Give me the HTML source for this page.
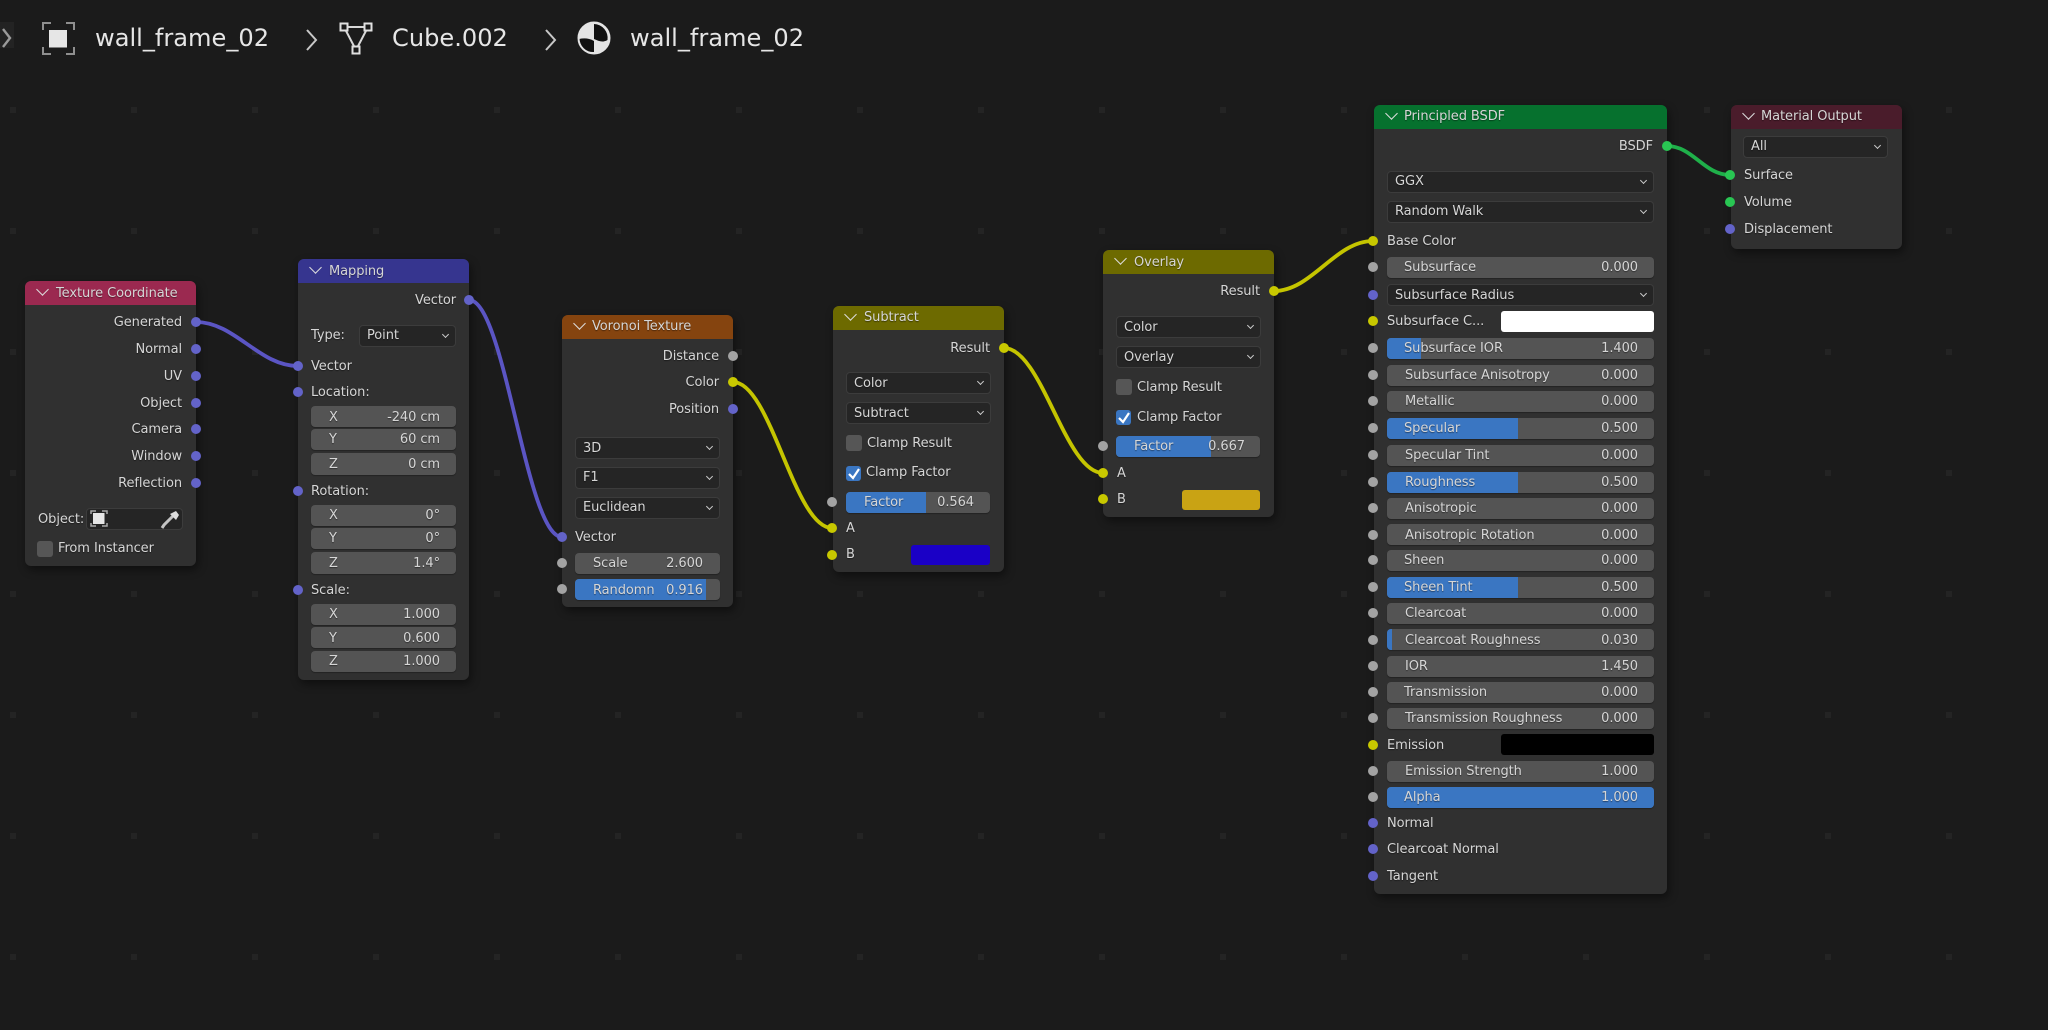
<!DOCTYPE html>
<html lang="en"><head><meta charset="utf-8"><title>Blender Shader Nodes</title>
<style>
html,body{margin:0;padding:0;background:#1b1b1b}
body{position:relative;width:2048px;height:1030px;overflow:hidden;font:13px/20px "DejaVu Sans","Liberation Sans",sans-serif;color:#d6d6d6;filter:blur(.35px)}
svg{position:absolute;left:0;top:0}
.n{position:absolute;background:#303030;border-radius:6px;box-shadow:2px 4px 9px rgba(0,0,0,.45)}
.h{position:absolute;left:0;right:0;top:0;height:24px;border-radius:6px 6px 0 0}
.t{position:absolute;white-space:nowrap;text-shadow:0 1px 1px rgba(0,0,0,.45);margin-top:1px;letter-spacing:-.08px}
.r{text-align:right}
.f{position:absolute;background:#545454;border-radius:4px;box-shadow:0 1px 1px rgba(0,0,0,.3);height:21px;overflow:hidden}
.b{position:absolute;left:0;top:0;bottom:0;background:#3a76c2}
.d{position:absolute;background:#252525;border:1px solid #3c3c3c;border-radius:4px;height:20px;box-sizing:content-box}
.d:after{content:"";position:absolute;right:7px;top:6px;width:4px;height:4px;border-right:1.5px solid #ccc;border-bottom:1.5px solid #ccc;transform:rotate(45deg)}
.d.x:after{display:none}
.c{position:absolute;width:8px;height:8px;border-right:1.5px solid #ddd;border-bottom:1.5px solid #ddd;transform:rotate(45deg);margin-top:-2px}
.s{position:absolute;width:10px;height:10px;border-radius:50%;margin:-5px 0 0 -5px}
.p{background:#6363c9}.y{background:#c8c800}.g{background:#a3a3a3}.e{background:#29c653}
.k{position:absolute;width:16px;height:16px;border-radius:3px;background:#565656}
.w{position:absolute;border-radius:3px}
.top{position:absolute;font-size:24.1px;line-height:30px;color:#e6e6e6;white-space:nowrap;margin-top:1px}
</style></head><body>
<svg width="2048" height="1030"><defs><pattern id="dots" x="10" y="107" width="121" height="121" patternUnits="userSpaceOnUse"><rect width="6" height="6" fill="#242424"/></pattern></defs>
<rect x="0" y="100" width="1965" height="870" fill="url(#dots)"/></svg>

<svg width="2048" height="70" viewBox="0 0 2048 70" fill="none">
<rect x="0" y="22" width="14" height="26" fill="#232323"/>
<path d="M3 29l7 9-7 9" stroke="#9a9a9a" stroke-width="2.4"/>
<path d="M307 30l9 10-9 10M546 30l9 10-9 10" stroke="#c8c8c8" stroke-width="2"/>
<path d="M43 30v-7h8M66 23h8v7M43 47v7h8M66 54h8v-7" stroke="#8f8f8f" stroke-width="2"/>
<rect x="49" y="30" width="18" height="17.500" fill="#e6e6e6"/>
<path d="M344 27h24M344 27l12 23M368 27l-12 23" stroke="#d8d8d8" stroke-width="2"/>
<rect x="340.500" y="23.500" width="7" height="7" fill="#1b1b1b" stroke="#e0e0e0" stroke-width="2"/>
<rect x="364.500" y="23.500" width="7" height="7" fill="#1b1b1b" stroke="#e0e0e0" stroke-width="2"/>
<rect x="352.500" y="46.500" width="7" height="7" fill="#1b1b1b" stroke="#e0e0e0" stroke-width="2"/>
<circle cx="594" cy="38" r="15.500" fill="#e4e4e4"/>
<path d="M594 24a14 14 0 0 1 13.500 16c-5 3-9 1-13.500-1z" fill="#111"/>
<path d="M579 39c5-1 10-1 15 2v11a14 14 0 0 1-15-13z" fill="#111"/>
<circle cx="594" cy="38" r="15.500" stroke="#e4e4e4" stroke-width="2"/>
</svg>
<div class="top" style="left:95px;top:22px">wall_frame_02</div>
<div class="top" style="left:392px;top:22px">Cube.002</div>
<div class="top" style="left:630px;top:22px">wall_frame_02</div>

<!-- Texture Coordinate -->
<div class="n" style="left:25px;top:281px;width:171px;height:285px"><div class="h" style="background:#9b2950"></div></div>
<div class="c" style="left:38px;top:287px"></div><div class="t" style="left:56px;top:283px">Texture Coordinate</div>
<div class="t r" style="right:1866px;top:312px">Generated</div>
<div class="t r" style="right:1866px;top:339px">Normal</div>
<div class="t r" style="right:1866px;top:366px">UV</div>
<div class="t r" style="right:1866px;top:393px">Object</div>
<div class="t r" style="right:1866px;top:419px">Camera</div>
<div class="t r" style="right:1866px;top:446px">Window</div>
<div class="t r" style="right:1866px;top:473px">Reflection</div>
<div class="t" style="left:38px;top:509px">Object:</div>
<div class="d x" style="left:86px;top:508px;width:95px"></div>
<svg width="2048" height="1030" fill="none" style="z-index:2">
<path d="M91 514v-3h5M102 511h5v3M91 523v3h5M102 526h5v-3" stroke="#aaa" stroke-width="1.500"/>
<rect x="93" y="513" width="11.500" height="11" fill="#e6e6e6"/>
<path d="M162 528l2-3 9-9" stroke="#c4c4c4" stroke-width="3"/>
<path d="M170 514l6 6 3-5-3-4z" fill="#ddd"/>
</svg>
<div class="k" style="left:37px;top:541px"></div><div class="t" style="left:58px;top:538px">From Instancer</div>

<!-- Mapping -->
<div class="n" style="left:298px;top:259px;width:171px;height:421px"><div class="h" style="background:#36358f"></div></div>
<div class="c" style="left:311px;top:265px"></div><div class="t" style="left:329px;top:261px">Mapping</div>
<div class="t r" style="right:1592px;top:290px">Vector</div>
<div class="t" style="left:311px;top:325px">Type:</div>
<div class="d" style="left:359px;top:325px;width:95px"></div><div class="t" style="left:367px;top:325px">Point</div>
<div class="t" style="left:311px;top:356px">Vector</div>
<div class="t" style="left:311px;top:382px">Location:</div>
<div class="f" style="left:311px;top:406px;width:145px"></div><div class="f" style="left:311px;top:429px;width:145px"></div><div class="f" style="left:311px;top:453px;width:145px;height:22px"></div>
<div class="t" style="left:329px;top:407px">X</div><div class="t r" style="right:1608px;top:407px">-240 cm</div>
<div class="t" style="left:329px;top:429px">Y</div><div class="t r" style="right:1608px;top:429px">60 cm</div>
<div class="t" style="left:329px;top:454px">Z</div><div class="t r" style="right:1608px;top:454px">0 cm</div>
<div class="t" style="left:311px;top:481px">Rotation:</div>
<div class="f" style="left:311px;top:505px;width:145px"></div><div class="f" style="left:311px;top:528px;width:145px"></div><div class="f" style="left:311px;top:552px;width:145px;height:22px"></div>
<div class="t" style="left:329px;top:505px">X</div><div class="t r" style="right:1608px;top:505px">0°</div>
<div class="t" style="left:329px;top:528px">Y</div><div class="t r" style="right:1608px;top:528px">0°</div>
<div class="t" style="left:329px;top:553px">Z</div><div class="t r" style="right:1608px;top:553px">1.4°</div>
<div class="t" style="left:311px;top:580px">Scale:</div>
<div class="f" style="left:311px;top:604px;width:145px"></div><div class="f" style="left:311px;top:627px;width:145px"></div><div class="f" style="left:311px;top:651px;width:145px"></div>
<div class="t" style="left:329px;top:604px">X</div><div class="t r" style="right:1608px;top:604px">1.000</div>
<div class="t" style="left:329px;top:628px">Y</div><div class="t r" style="right:1608px;top:628px">0.600</div>
<div class="t" style="left:329px;top:651px">Z</div><div class="t r" style="right:1608px;top:651px">1.000</div>

<!-- Voronoi -->
<div class="n" style="left:562px;top:315px;width:171px;height:292px"><div class="h" style="background:#85440f"></div></div>
<div class="c" style="left:575px;top:321px"></div><div class="t" style="left:592px;top:316px">Voronoi Texture</div>
<div class="t r" style="right:1329px;top:346px">Distance</div>
<div class="t r" style="right:1329px;top:372px">Color</div>
<div class="t r" style="right:1329px;top:399px">Position</div>
<div class="d" style="left:575px;top:437px;width:143px"></div><div class="t" style="left:583px;top:438px">3D</div>
<div class="d" style="left:575px;top:467px;width:143px"></div><div class="t" style="left:583px;top:467px">F1</div>
<div class="d" style="left:575px;top:497px;width:143px"></div><div class="t" style="left:583px;top:497px">Euclidean</div>
<div class="t" style="left:575px;top:527px">Vector</div>
<div class="f" style="left:575px;top:553px;width:145px"></div><div class="t" style="left:593px;top:553px">Scale</div><div class="t r" style="right:1345px;top:553px">2.600</div>
<div class="f" style="left:575px;top:579px;width:145px"><div class="b" style="width:131px"></div></div><div class="t" style="left:593px;top:580px">Randomn</div><div class="t r" style="right:1345px;top:580px">0.916</div>

<!-- Subtract -->
<div class="n" style="left:833px;top:306px;width:171px;height:266px"><div class="h" style="background:#6d6a00"></div></div>
<div class="c" style="left:846px;top:312px"></div><div class="t" style="left:864px;top:307px">Subtract</div>
<div class="t r" style="right:1058px;top:338px">Result</div>
<div class="d" style="left:846px;top:372px;width:143px"></div><div class="t" style="left:854px;top:373px">Color</div>
<div class="d" style="left:846px;top:402px;width:143px"></div><div class="t" style="left:854px;top:403px">Subtract</div>
<div class="k" style="left:846px;top:435px"></div><div class="t" style="left:867px;top:433px">Clamp Result</div>
<div class="k" style="left:846px;top:466px;width:15px;height:15px;background:#3a76c2"></div><div class="t" style="left:866px;top:462px">Clamp Factor</div>
<div class="f" style="left:846px;top:492px;width:144px"><div class="b" style="width:80px"></div></div><div class="t" style="left:864px;top:492px">Factor</div><div class="t r" style="right:1074px;top:492px">0.564</div>
<div class="t" style="left:846px;top:518px">A</div>
<div class="t" style="left:846px;top:544px">B</div>
<div class="w" style="left:911px;top:545px;width:79px;height:20px;background:#1a00c6"></div>

<!-- Overlay -->
<div class="n" style="left:1103px;top:250px;width:171px;height:267px"><div class="h" style="background:#6d6a00"></div></div>
<div class="c" style="left:1116px;top:256px"></div><div class="t" style="left:1134px;top:252px">Overlay</div>
<div class="t r" style="right:788px;top:281px">Result</div>
<div class="d" style="left:1116px;top:316px;width:143px"></div><div class="t" style="left:1124px;top:317px">Color</div>
<div class="d" style="left:1116px;top:346px;width:143px"></div><div class="t" style="left:1124px;top:347px">Overlay</div>
<div class="k" style="left:1116px;top:379px"></div><div class="t" style="left:1137px;top:377px">Clamp Result</div>
<div class="k" style="left:1116px;top:410px;width:15px;height:15px;background:#3a76c2"></div><div class="t" style="left:1137px;top:407px">Clamp Factor</div>
<div class="f" style="left:1116px;top:436px;width:144px"><div class="b" style="width:95px"></div></div><div class="t" style="left:1134px;top:436px">Factor</div><div class="t r" style="right:803px;top:436px">0.667</div>
<div class="t" style="left:1117px;top:463px">A</div>
<div class="t" style="left:1117px;top:489px">B</div>
<div class="w" style="left:1182px;top:490px;width:78px;height:20px;background:#c9a314"></div>

<!-- check marks -->
<svg width="2048" height="1030" fill="none" style="z-index:2">
<path d="M849 474l4 4 6-9M1119 418l4 4 6-9" stroke="#fff" stroke-width="2.200"/>
</svg>

<!-- Principled BSDF -->
<div class="n" style="left:1374px;top:105px;width:293px;height:789px"><div class="h" style="background:#06712e"></div></div>
<div class="c" style="left:1387px;top:111px"></div><div class="t" style="left:1404px;top:106px">Principled BSDF</div>
<div class="t r" style="right:395px;top:136px">BSDF</div>
<div class="d" style="left:1387px;top:171px;width:265px"></div><div class="t" style="left:1395px;top:171px">GGX</div>
<div class="d" style="left:1387px;top:201px;width:265px"></div><div class="t" style="left:1395px;top:201px">Random Walk</div>
<div class="t" style="left:1387px;top:231px">Base Color</div>
<div class="f" style="left:1387px;top:257px;width:267px"></div><div class="t" style="left:1404px;top:257px">Subsurface</div><div class="t r" style="right:410px;top:257px">0.000</div>
<div class="d" style="left:1387px;top:284px;width:265px"></div><div class="t" style="left:1395px;top:285px">Subsurface Radius</div>
<div class="t" style="left:1387px;top:311px">Subsurface C...</div>
<div class="w" style="left:1501px;top:311px;width:153px;height:21px;background:#fff"></div>
<div class="f" style="left:1387px;top:338px;width:267px"><div class="b" style="width:34px"></div></div><div class="t" style="left:1404px;top:338px">Subsurface IOR</div><div class="t r" style="right:410px;top:338px">1.400</div>
<div class="f" style="left:1387px;top:365px;width:267px"></div><div class="t" style="left:1405px;top:365px">Subsurface Anisotropy</div><div class="t r" style="right:410px;top:365px">0.000</div>
<div class="f" style="left:1387px;top:391px;width:267px"></div><div class="t" style="left:1405px;top:391px">Metallic</div><div class="t r" style="right:410px;top:391px">0.000</div>
<div class="f" style="left:1387px;top:418px;width:267px"><div class="b" style="width:131px"></div></div><div class="t" style="left:1404px;top:418px">Specular</div><div class="t r" style="right:410px;top:418px">0.500</div>
<div class="f" style="left:1387px;top:445px;width:267px"></div><div class="t" style="left:1405px;top:445px">Specular Tint</div><div class="t r" style="right:410px;top:445px">0.000</div>
<div class="f" style="left:1387px;top:472px;width:267px"><div class="b" style="width:131px"></div></div><div class="t" style="left:1405px;top:472px">Roughness</div><div class="t r" style="right:410px;top:472px">0.500</div>
<div class="f" style="left:1387px;top:498px;width:267px"></div><div class="t" style="left:1405px;top:498px">Anisotropic</div><div class="t r" style="right:410px;top:498px">0.000</div>
<div class="f" style="left:1387px;top:524px;width:267px"></div><div class="t" style="left:1405px;top:525px">Anisotropic Rotation</div><div class="t r" style="right:410px;top:525px">0.000</div>
<div class="f" style="left:1387px;top:550px;width:267px"></div><div class="t" style="left:1404px;top:550px">Sheen</div><div class="t r" style="right:410px;top:550px">0.000</div>
<div class="f" style="left:1387px;top:577px;width:267px"><div class="b" style="width:131px"></div></div><div class="t" style="left:1404px;top:577px">Sheen Tint</div><div class="t r" style="right:410px;top:577px">0.500</div>
<div class="f" style="left:1387px;top:603px;width:267px"></div><div class="t" style="left:1405px;top:603px">Clearcoat</div><div class="t r" style="right:410px;top:603px">0.000</div>
<div class="f" style="left:1387px;top:629px;width:267px"><div class="b" style="width:5px"></div></div><div class="t" style="left:1405px;top:630px">Clearcoat Roughness</div><div class="t r" style="right:410px;top:630px">0.030</div>
<div class="f" style="left:1387px;top:656px;width:267px"></div><div class="t" style="left:1405px;top:656px">IOR</div><div class="t r" style="right:410px;top:656px">1.450</div>
<div class="f" style="left:1387px;top:682px;width:267px"></div><div class="t" style="left:1404px;top:682px">Transmission</div><div class="t r" style="right:410px;top:682px">0.000</div>
<div class="f" style="left:1387px;top:708px;width:267px"></div><div class="t" style="left:1405px;top:708px">Transmission Roughness</div><div class="t r" style="right:410px;top:708px">0.000</div>
<div class="t" style="left:1387px;top:735px">Emission</div>
<div class="w" style="left:1501px;top:734px;width:153px;height:21px;background:#000"></div>
<div class="f" style="left:1387px;top:761px;width:267px"></div><div class="t" style="left:1405px;top:761px">Emission Strength</div><div class="t r" style="right:410px;top:761px">1.000</div>
<div class="f" style="left:1387px;top:787px;width:267px"><div class="b" style="width:267px"></div></div><div class="t" style="left:1404px;top:787px">Alpha</div><div class="t r" style="right:410px;top:787px">1.000</div>
<div class="t" style="left:1387px;top:813px">Normal</div>
<div class="t" style="left:1387px;top:839px">Clearcoat Normal</div>
<div class="t" style="left:1387px;top:866px">Tangent</div>

<!-- Material Output -->
<div class="n" style="left:1731px;top:105px;width:171px;height:144px"><div class="h" style="background:#4a1c2b"></div></div>
<div class="c" style="left:1744px;top:111px"></div><div class="t" style="left:1761px;top:106px">Material Output</div>
<div class="d" style="left:1743px;top:136px;width:143px"></div><div class="t" style="left:1751px;top:136px">All</div>
<div class="t" style="left:1744px;top:165px">Surface</div>
<div class="t" style="left:1744px;top:192px">Volume</div>
<div class="t" style="left:1744px;top:219px">Displacement</div>

<!-- wires -->
<svg width="2048" height="1030" fill="none" style="z-index:3">
<g stroke-width="3.800" stroke-linecap="round">
<path d="M196 322C235 322 259 366 298 366" stroke="#5b55c4"/>
<path d="M469 300C505 300 526 537 562 537" stroke="#5b55c4"/>
<path d="M733 382C771 382 794 528 832 528" stroke="#c4c400"/>
<path d="M1004 348C1042 348 1065 473 1103 473" stroke="#c4c400"/>
<path d="M1274 291C1312 291 1335 241 1373 241" stroke="#c4c400"/>
<path d="M1667 146C1693 146 1704 175 1730 175" stroke="#1fb04a"/>
</g></svg>

<!-- sockets -->
<div style="position:absolute;left:0;top:0;z-index:4">
<i class="s p" style="left:196px;top:322px"></i><i class="s p" style="left:196px;top:349px"></i><i class="s p" style="left:196px;top:376px"></i><i class="s p" style="left:196px;top:403px"></i><i class="s p" style="left:196px;top:429px"></i><i class="s p" style="left:196px;top:456px"></i><i class="s p" style="left:196px;top:483px"></i>
<i class="s p" style="left:469px;top:300px"></i><i class="s p" style="left:298px;top:366px"></i><i class="s p" style="left:298px;top:392px"></i><i class="s p" style="left:298px;top:491px"></i><i class="s p" style="left:298px;top:590px"></i>
<i class="s g" style="left:733px;top:356px"></i><i class="s y" style="left:733px;top:382px"></i><i class="s p" style="left:733px;top:409px"></i><i class="s p" style="left:562px;top:537px"></i><i class="s g" style="left:562px;top:563px"></i><i class="s g" style="left:562px;top:589px"></i>
<i class="s y" style="left:1004px;top:348px"></i><i class="s g" style="left:832px;top:502px"></i><i class="s y" style="left:832px;top:528px"></i><i class="s y" style="left:832px;top:555px"></i>
<i class="s y" style="left:1274px;top:291px"></i><i class="s g" style="left:1103px;top:446px"></i><i class="s y" style="left:1103px;top:473px"></i><i class="s y" style="left:1103px;top:499px"></i>
<i class="s e" style="left:1667px;top:146px"></i>
<i class="s y" style="left:1373px;top:241px"></i><i class="s g" style="left:1373px;top:267px"></i><i class="s p" style="left:1373px;top:295px"></i><i class="s y" style="left:1373px;top:321px"></i><i class="s g" style="left:1373px;top:348px"></i><i class="s g" style="left:1373px;top:375px"></i><i class="s g" style="left:1373px;top:401px"></i><i class="s g" style="left:1373px;top:428px"></i><i class="s g" style="left:1373px;top:455px"></i><i class="s g" style="left:1373px;top:482px"></i><i class="s g" style="left:1373px;top:508px"></i><i class="s g" style="left:1373px;top:535px"></i><i class="s g" style="left:1373px;top:560px"></i><i class="s g" style="left:1373px;top:587px"></i><i class="s g" style="left:1373px;top:613px"></i><i class="s g" style="left:1373px;top:640px"></i><i class="s g" style="left:1373px;top:666px"></i><i class="s g" style="left:1373px;top:692px"></i><i class="s g" style="left:1373px;top:718px"></i><i class="s y" style="left:1373px;top:745px"></i><i class="s g" style="left:1373px;top:771px"></i><i class="s g" style="left:1373px;top:797px"></i><i class="s p" style="left:1373px;top:823px"></i><i class="s p" style="left:1373px;top:849px"></i><i class="s p" style="left:1373px;top:876px"></i>
<i class="s e" style="left:1730px;top:175px"></i><i class="s e" style="left:1730px;top:202px"></i><i class="s p" style="left:1730px;top:229px"></i>
</div>
</body></html>
